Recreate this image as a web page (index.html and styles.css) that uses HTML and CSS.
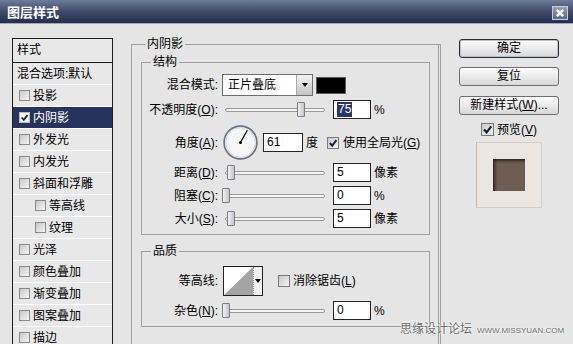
FILE: index.html
```html
<!DOCTYPE html>
<html lang="zh-CN">
<head>
    <meta charset="UTF-8">
    <title>图层样式</title>
    <link rel="stylesheet" href="styles.css">
</head>
<body>
    <div class="titlebar">
        <span class="title">图层样式</span>
        <span class="close"><svg viewBox="0 0 10 10"><path d="M2.4 2.4 L7.6 7.6 M7.6 2.4 L2.4 7.6"/></svg></span>
    </div>

    <div class="main">
        <div class="styles-list">
            <div class="list-head">样式</div>
            <div class="item plain">混合选项:默认</div>
            <div class="item"><span class="cb"></span>投影</div>
            <div class="item active"><span class="cb on"><svg viewBox="0 0 10 10"><path d="M1.8 5 L4.2 7.6 L8.4 2.2"/></svg></span>内阴影</div>
            <div class="item"><span class="cb"></span>外发光</div>
            <div class="item"><span class="cb"></span>内发光</div>
            <div class="item"><span class="cb"></span>斜面和浮雕</div>
            <div class="item sub"><span class="cb"></span>等高线</div>
            <div class="item sub"><span class="cb"></span>纹理</div>
            <div class="item"><span class="cb"></span>光泽</div>
            <div class="item"><span class="cb"></span>颜色叠加</div>
            <div class="item"><span class="cb"></span>渐变叠加</div>
            <div class="item"><span class="cb"></span>图案叠加</div>
            <div class="item"><span class="cb"></span>描边</div>
        </div>

        <fieldset class="effect">
            <legend>内阴影</legend>

            <fieldset class="group structure">
                <legend>结构</legend>
                <div class="row row-mode">
                    <span class="lbl">混合模式:</span>
                    <div class="select">
                        <span class="select-text">正片叠底</span>
                        <span class="select-btn"><i class="tri"></i></span>
                    </div>
                    <span class="swatch"></span>
                </div>
                <div class="row">
                    <span class="lbl">不透明度(<u>O</u>):</span>
                    <div class="slider"><span class="track"></span><span class="thumb" style="--v:75"></span></div>
                    <span class="field"><span class="sel">75</span></span>
                    <span class="unit">%</span>
                </div>
                <div class="row row-angle">
                    <span class="lbl">角度(<u>A</u>):</span>
                    <svg class="dial" viewBox="0 0 35 35">
                        <circle cx="17.5" cy="17.5" r="16.4" fill="#f6f6f8" stroke="#6c7282" stroke-width="1.6"/>
                        <circle cx="17.5" cy="17.5" r="14.8" fill="none" stroke="#d4d6dc" stroke-width="1"/>
                        <line x1="17.5" y1="17.5" x2="24.3" y2="5.3" stroke="#000" stroke-width="1.2"/>
                        <circle cx="17.5" cy="17.5" r="1.6" fill="#000"/>
                    </svg>
                    <span class="field wide">61</span>
                    <span class="unit">度</span>
                    <span class="check-label global"><span class="cb big on"><svg viewBox="0 0 10 10"><path d="M1.8 5 L4.2 7.6 L8.4 2.2"/></svg></span><span>使用全局光(<u>G</u>)</span></span>
                </div>
                <div class="row row-gap3">
                    <span class="lbl">距离(<u>D</u>):</span>
                    <div class="slider"><span class="track"></span><span class="thumb" style="--v:5"></span></div>
                    <span class="field">5</span>
                    <span class="unit">像素</span>
                </div>
                <div class="row">
                    <span class="lbl">阻塞(<u>C</u>):</span>
                    <div class="slider"><span class="track"></span><span class="thumb" style="--v:0"></span></div>
                    <span class="field">0</span>
                    <span class="unit">%</span>
                </div>
                <div class="row">
                    <span class="lbl">大小(<u>S</u>):</span>
                    <div class="slider"><span class="track"></span><span class="thumb" style="--v:5"></span></div>
                    <span class="field">5</span>
                    <span class="unit">像素</span>
                </div>
            </fieldset>

            <fieldset class="group quality">
                <legend>品质</legend>
                <div class="row row-contour">
                    <span class="lbl">等高线:</span>
                    <div class="contour">
                        <svg class="curve" viewBox="0 0 29 28" preserveAspectRatio="none"><polygon points="0,28 29,0 29,28" fill="#a4a4a4"/></svg>
                        <span class="contour-btn"><i class="tri"></i></span>
                    </div>
                    <span class="check-label aa"><span class="cb big"></span><span>消除锯齿(<u>L</u>)</span></span>
                </div>
                <div class="row row-noise">
                    <span class="lbl">杂色(<u>N</u>):</span>
                    <div class="slider"><span class="track"></span><span class="thumb" style="--v:0"></span></div>
                    <span class="field">0</span>
                    <span class="unit">%</span>
                </div>
            </fieldset>
        </fieldset>

        <div class="actions">
            <div class="btn default">确定</div>
            <div class="btn reset">复位</div>
            <div class="btn new">新建样式(<u>W</u>)...</div>
            <div class="preview-check"><span class="cb big on"><svg viewBox="0 0 10 10"><path d="M1.8 5 L4.2 7.6 L8.4 2.2"/></svg></span><span>预览(<u>V</u>)</span></div>
            <div class="preview"><span class="preview-swatch"></span></div>
        </div>
    </div>

    <div class="watermark">
        <span class="wm-cn">思缘设计论坛</span>
        <span class="wm-url">WWW.MISSYUAN.COM</span>
    </div>
</body>
</html>
```

FILE: styles.css
```css
* {
    box-sizing: border-box;
}

body {
    margin: 0;
    width: 573px;
    height: 344px;
    overflow: hidden;
    position: relative;
    background-color: #e5e5e5;
    color: #000;
    font: 12px/16px "Liberation Sans", "Noto Sans CJK SC", sans-serif;
}

u {
    text-decoration: underline;
    text-underline-offset: 1px;
}

/* title bar */
.titlebar {
    height: 24px;
    display: flex;
    align-items: center;
    justify-content: space-between;
    padding: 0 5px 0 7px;
    background: linear-gradient(#6e7b99, #434f6d 45%, #242e4b);
    border-bottom: 1px solid #a3a8b2;
}

.title {
    color: #fff;
    font: bold 13px/16px "Noto Sans CJK SC", sans-serif;
}

.close {
    width: 16px;
    height: 14px;
    margin-top: 2px;
    border: 1px solid #c6ccd6;
    background: linear-gradient(#98a1b4, #5d6882);
}

.close svg {
    display: block;
    width: 100%;
    height: 100%;
    fill: none;
    stroke: #fff;
    stroke-width: 2.2;
}

.main {
    display: flex;
    align-items: flex-start;
    height: 320px;
    overflow: hidden;
}

/* styles list */
.styles-list {
    flex: none;
    width: 101px;
    height: 306px;
    margin: 14px 0 0 12px;
    overflow: hidden;
    border: 1px solid #1d1d1d;
    border-bottom: none;
    background-color: #e8e8e8;
}

.list-head {
    height: 24px;
    line-height: 23px;
    padding-left: 4px;
    border-bottom: 1px solid #1d1d1d;
}

.item {
    height: 22px;
    display: flex;
    align-items: center;
    gap: 3px;
    padding-left: 6px;
    border-bottom: 1px solid #fff;
    white-space: nowrap;
}

.item.plain {
    padding-left: 4px;
}

.item.sub {
    padding-left: 22px;
}

.item.active {
    background-color: #27335a;
    color: #fff;
}

.cb {
    flex: none;
    width: 11px;
    height: 11px;
    border: 1px solid #8a8a8a;
    background: linear-gradient(135deg, #c9c9c9, #f4f4f4);
}

.cb.big {
    width: 12px;
    height: 12px;
    border-color: #7b7b7b;
}

.item.active .cb {
    background: #f4f4f4;
    border-color: #b8bcc6;
}

.cb svg {
    display: block;
    width: 100%;
    height: 100%;
    fill: none;
    stroke: #1e2233;
    stroke-width: 2;
}

/* effect panel */
.effect {
    flex: none;
    width: 310px;
    height: 308px;
    min-width: 0;
    margin: 12px 0 0 18px;
    padding: 2px 8px 0 9px;
    border: 1px solid #a0a0a0;
    border-right: 3px double #a0a0a0;
    border-bottom: none;
}

legend {
    padding: 0 2px;
    line-height: 16px;
}

.effect > legend {
    margin-left: 4px;
}

.group {
    margin: 0;
    padding: 0;
    min-width: 0;
    border: 1px solid #a0a0a0;
}

.group > legend {
    margin-left: 9px;
}

.structure {
    padding: 4px 0 6px;
}

.quality {
    margin-top: 8px;
    padding: 7px 0 6px;
}

.row {
    display: flex;
    align-items: center;
    height: 19px;
    margin-top: 4px;
    white-space: nowrap;
}

.row-mode {
    height: 22px;
    margin-top: 0;
}

.row-angle {
    height: 35px;
    margin-top: 6px;
}

.row-gap3 {
    margin-top: 3px;
}

.row-contour {
    height: 30px;
    margin-top: 0;
}

.row-noise {
    margin-top: 5px;
}

.lbl {
    flex: none;
    width: 76px;
    margin-right: 4px;
    text-align: right;
}

.select {
    flex: none;
    display: flex;
    width: 91px;
    height: 22px;
    border: 1px solid #6f6f6f;
    background-color: #fff;
}

.select-text {
    padding-left: 5px;
    line-height: 20px;
}

.select-btn {
    margin-left: auto;
    width: 16px;
    display: flex;
    align-items: center;
    justify-content: center;
    border-left: 1px solid #a8a8a8;
    background: linear-gradient(#f3f3f3, #c3c3c3);
}

.tri {
    width: 0;
    height: 0;
    border-left: 3px solid transparent;
    border-right: 3px solid transparent;
    border-top: 4px solid #000;
}

.swatch {
    flex: none;
    width: 30px;
    height: 17px;
    margin-left: 3px;
    border: 1px solid #5a5a5a;
    background-color: #000;
}

.slider {
    flex: none;
    position: relative;
    width: 104px;
    height: 19px;
    margin-right: 7px;
    display: flex;
    align-items: center;
    padding-left: 3px;
}

.track {
    width: 100px;
    height: 4px;
    border: 1px solid #999;
    border-radius: 2px;
    background-color: #f6f6f6;
}

.thumb {
    position: absolute;
    top: 2px;
    left: calc(var(--v) * 1px);
    width: 8px;
    height: 15px;
    border: 1px solid #7d7d84;
    border-radius: 1px;
    background: linear-gradient(90deg, #f2f2f4, #c2c3ca);
}

.field {
    flex: none;
    width: 38px;
    height: 19px;
    padding-left: 3px;
    line-height: 17px;
    border: 1px solid #262626;
    background-color: #fff;
}

.field.wide {
    width: 40px;
}

.sel {
    display: inline-block;
    padding: 0 1px;
    line-height: 15px;
    background-color: #29366a;
    color: #fff;
}

.unit {
    margin-left: 3px;
}

.dial {
    flex: none;
    width: 35px;
    height: 35px;
    margin: 0 5px 0 1px;
}

.check-label {
    display: flex;
    align-items: center;
    gap: 4px;
}

.global {
    margin-left: 9px;
}

.aa {
    margin-left: 15px;
    gap: 3px;
}

.contour {
    flex: none;
    display: flex;
    width: 40px;
    height: 30px;
    margin-left: 1px;
    border: 1px solid #222;
    background-color: #fff;
}

.curve {
    display: block;
    width: 29px;
    height: 28px;
}

.contour-btn {
    width: 9px;
    display: flex;
    justify-content: center;
    padding-top: 12px;
    border-left: 1px dotted #8a8a8a;
    background-color: #efefef;
}

/* buttons column */
.actions {
    flex: none;
    width: 100px;
    margin: 15px 0 0 18px;
    display: flex;
    flex-direction: column;
    align-items: center;
}

.btn {
    width: 100px;
    height: 19px;
    line-height: 17px;
    text-align: center;
    border: 1px solid #6e6e6e;
    border-radius: 3px;
    background: linear-gradient(#fdfdfd, #d8d8d8);
}

.btn.default {
    border-color: #2e2e2e;
    box-shadow: inset 0 0 0 1px #b7c0d4;
}

.btn.reset {
    margin-top: 9px;
}

.btn.new {
    margin-top: 10px;
}

.preview-check {
    margin-top: 8px;
    display: flex;
    align-items: center;
    gap: 3px;
    height: 13px;
}

.preview-check .cb {
    width: 13px;
    height: 13px;
}

.preview {
    margin-top: 6px;
    width: 66px;
    height: 66px;
    display: flex;
    align-items: center;
    justify-content: center;
    border: 1px solid #d3cec9;
    border-left-color: #bdb8b3;
    background-color: #ebe6e1;
}

.preview-swatch {
    width: 32px;
    height: 32px;
    background-color: #6e5d53;
    box-shadow: inset 2px 2px 3px #2f251e;
}

/* watermark over the dialog */
.watermark {
    position: absolute;
    left: 400px;
    top: 320px;
    display: flex;
    align-items: baseline;
    gap: 5px;
    color: #6c6c6c;
    text-shadow: 0 0 2px #fff, 0 0 2px #fff;
}

.wm-cn {
    font: 12px/16px "Noto Sans CJK SC", sans-serif;
}

.wm-url {
    font: 8px/10px "Liberation Sans", sans-serif;
}
```
